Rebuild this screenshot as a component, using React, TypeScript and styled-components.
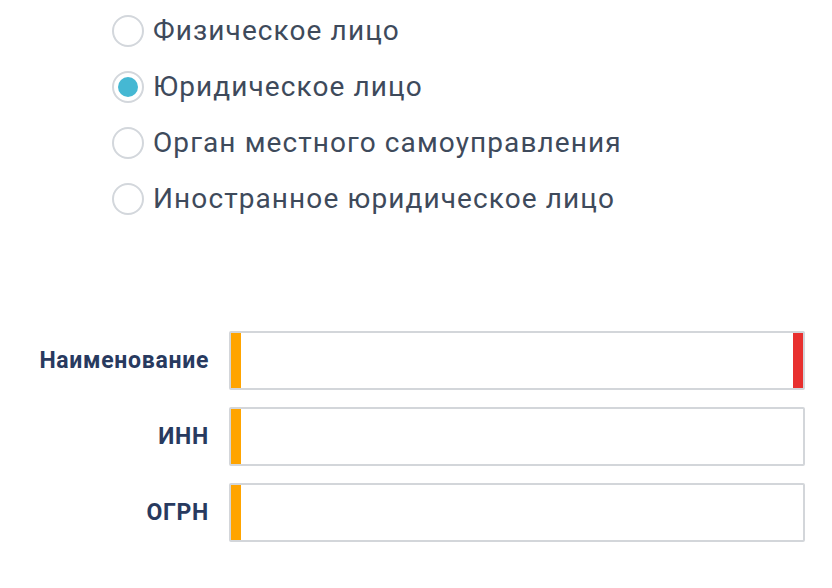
import React, { useState } from "react"
import styled, { createGlobalStyle } from "styled-components"

const GlobalStyle = createGlobalStyle`
  html, body {
    margin: 0;
    padding: 0;
    background: #ffffff;
    font-family: Roboto, "Noto Sans", Arial, sans-serif;
  }
`

const Page = styled.div`
  width: 832px;
  height: 588px;
  box-sizing: border-box;
  padding-top: 15px;
`

const RadioGroup = styled.div`
  display: flex;
  flex-direction: column;
  gap: 25px;
  padding-left: 112px;
`

const RadioRow = styled.label`
  display: flex;
  align-items: center;
  gap: 9px;
  height: 31px;
  cursor: pointer;
`

const RadioCircle = styled.span<{ $checked: boolean }>`
  width: 32px;
  height: 32px;
  box-sizing: border-box;
  border: 2px solid #d3d7dc;
  border-radius: 50%;
  display: flex;
  align-items: center;
  justify-content: center;
  flex-shrink: 0;

  &::after {
    content: "";
    width: 20px;
    height: 20px;
    border-radius: 50%;
    background: #45b8d3;
    display: ${(p) => (p.$checked ? "block" : "none")};
  }
`

const RadioText = styled.span`
  font-size: 28px;
  letter-spacing: 1.1px;
  color: #3e4a5b;
  line-height: 31px;
`

const Form = styled.div`
  margin-top: 117px;
  display: flex;
  flex-direction: column;
  gap: 17px;
`

const FieldRow = styled.div`
  display: grid;
  grid-template-columns: 209px 576px;
  column-gap: 20px;
  align-items: center;
`

const FieldLabel = styled.span`
  text-align: right;
  font-weight: 700;
  font-size: 23px;
  letter-spacing: 0.7px;
  color: #283a5f;
`

const InputBox = styled.div<{ $error?: boolean }>`
  height: 59px;
  box-sizing: border-box;
  border: 2px solid #d3d6da;
  border-radius: 2px;
  display: flex;
  justify-content: space-between;
  background: #ffffff;

  &::before {
    content: "";
    width: 10px;
    background: #ffa400;
  }

  &::after {
    content: "";
    width: 10px;
    background: ${(p) => (p.$error ? "#e8302f" : "transparent")};
  }
`

const options = [
  "Физическое лицо",
  "Юридическое лицо",
  "Орган местного самоуправления",
  "Иностранное юридическое лицо",
]

const fields = [
  { label: "Наименование", error: true },
  { label: "ИНН", error: false },
  { label: "ОГРН", error: false },
]

export default function App() {
  const [selected, setSelected] = useState(1)

  return (
    <>
      <GlobalStyle />
      <Page>
        <RadioGroup>
          {options.map((opt, i) => (
            <RadioRow key={opt} onClick={() => setSelected(i)}>
              <RadioCircle $checked={selected === i} />
              <RadioText>{opt}</RadioText>
            </RadioRow>
          ))}
        </RadioGroup>

        <Form>
          {fields.map((f) => (
            <FieldRow key={f.label}>
              <FieldLabel>{f.label}</FieldLabel>
              <InputBox $error={f.error} />
            </FieldRow>
          ))}
        </Form>
      </Page>
    </>
  )
}
